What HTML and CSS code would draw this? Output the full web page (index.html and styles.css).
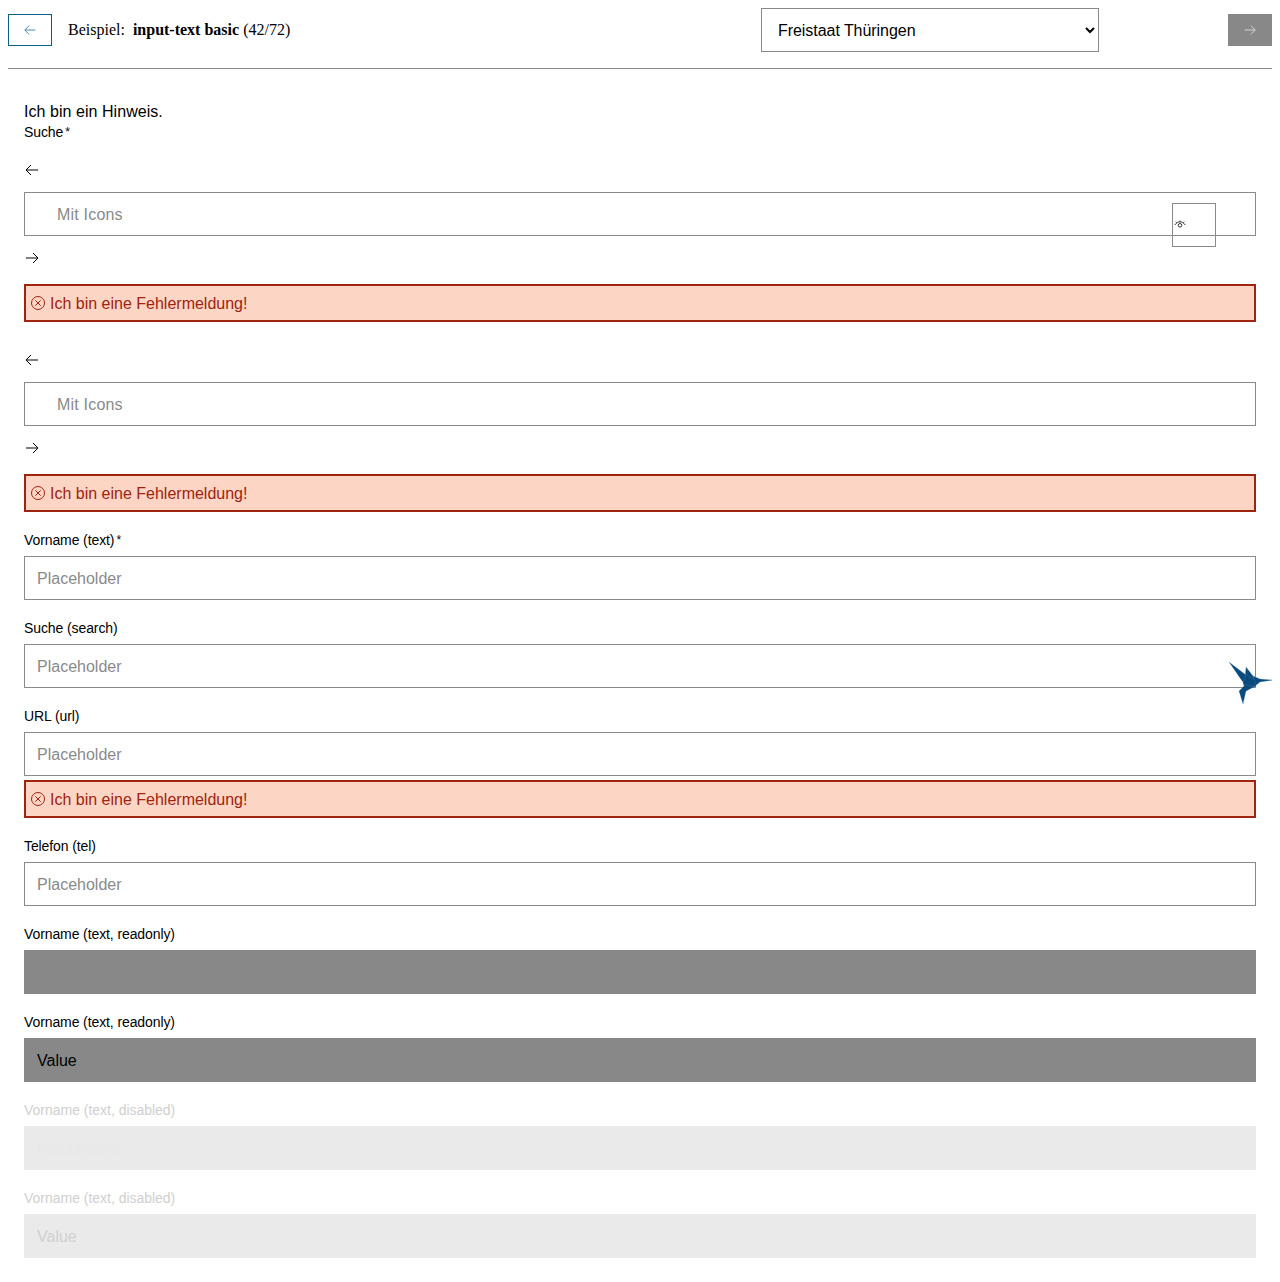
FILE: index.html
```html
<!DOCTYPE html>
<html lang="de">
<head>
<meta charset="utf-8">
<title>input-text basic</title>
<link rel="stylesheet" href="styles.css">
</head>
<body>
<header class="topbar">
  <button class="nav nav-prev" aria-label="Zurück">
    <svg class="icon" viewBox="0 0 16 16"><path d="M14 8H2.500M7 3 2 8l5 5"/></svg>
  </button>
  <p class="title">Beispiel: <b>input-text basic</b> (42/72)</p>
  <select class="theme"><option>Freistaat Thüringen</option></select>
  <button class="nav nav-next" aria-label="Weiter">
    <svg class="icon" viewBox="0 0 16 16"><path d="M2 8h11.500M9 3l5 5-5 5"/></svg>
  </button>
</header>
<main class="content">
  <p class="hint">Ich bin ein Hinweis.</p>
  <label class="label">Suche<span class="req">*</span></label>
  <div class="icon-field first">
    <svg class="icon side" viewBox="0 0 16 16"><path d="M14 8H2.500M7 3 2 8l5 5"/></svg>
    <div class="input-wrap">
      <input class="input with-icon" placeholder="Mit Icons">
      <button class="eye" aria-label="Anzeigen">
        <svg viewBox="0 0 12 12"><path d="M.8 6C2.300 3.600 4 2.800 6 2.800S9.700 3.600 11.200 6M2.600 3.600 1.800 2.700M6 2.800V1.600M9.400 3.600l.8-.9"/><circle cx="6" cy="6.300" r="1.800"/></svg>
      </button>
    </div>
    <svg class="icon side" viewBox="0 0 16 16"><path d="M2 8h11.500M9 3l5 5-5 5"/></svg>
  </div>
  <div class="error">
    <svg class="err-icon" viewBox="0 0 16 16"><circle cx="8" cy="8" r="6.500"/><path d="m5.300 5.300 5.400 5.400M10.700 5.300l-5.400 5.400"/></svg>
    Ich bin eine Fehlermeldung!
  </div>
  <div class="icon-field second">
    <svg class="icon side" viewBox="0 0 16 16"><path d="M14 8H2.500M7 3 2 8l5 5"/></svg>
    <input class="input with-icon" placeholder="Mit Icons">
    <svg class="icon side" viewBox="0 0 16 16"><path d="M2 8h11.500M9 3l5 5-5 5"/></svg>
  </div>
  <div class="error last-error">
    <svg class="err-icon" viewBox="0 0 16 16"><circle cx="8" cy="8" r="6.500"/><path d="m5.300 5.300 5.400 5.400M10.700 5.300l-5.400 5.400"/></svg>
    Ich bin eine Fehlermeldung!
  </div>
  <div class="field">
    <label class="label">Vorname (text)<span class="req">*</span></label>
    <input class="input" placeholder="Placeholder">
  </div>
  <div class="field">
    <label class="label">Suche (search)</label>
    <input class="input" type="search" placeholder="Placeholder">
  </div>
  <div class="field">
    <label class="label">URL (url)</label>
    <input class="input" placeholder="Placeholder">
    <div class="error under">
      <svg class="err-icon" viewBox="0 0 16 16"><circle cx="8" cy="8" r="6.500"/><path d="m5.300 5.300 5.400 5.400M10.700 5.300l-5.400 5.400"/></svg>
      Ich bin eine Fehlermeldung!
    </div>
  </div>
  <div class="field">
    <label class="label">Telefon (tel)</label>
    <input class="input" placeholder="Placeholder">
  </div>
  <div class="field">
    <label class="label">Vorname (text, readonly)</label>
    <input class="input readonly" readonly placeholder="Placeholder">
  </div>
  <div class="field">
    <label class="label">Vorname (text, readonly)</label>
    <input class="input readonly" readonly value="Value">
  </div>
  <div class="field">
    <label class="label muted">Vorname (text, disabled)</label>
    <input class="input disabled" disabled placeholder="Placeholder">
  </div>
  <div class="field">
    <label class="label muted">Vorname (text, disabled)</label>
    <input class="input disabled" disabled value="Value">
  </div>
</main>
<svg class="bird" viewBox="0 0 70 65" aria-hidden="true">
  <polygon points="19,12 36,25 43,30 35,35 30,28"/>
  <polygon points="36,17 43,26 46,33 35,28"/>
  <polygon points="43,26 50,29 63,30 50,32 45,36"/>
  <polygon points="33,33 36,25 45,30 46,36 36,41"/>
  <polygon points="35,35 44,36 36,41 33,54 29,41"/>
</svg>
</body>
</html>
```

FILE: styles.css
```css
* { box-sizing: border-box; }
body {
  margin: 8px;
  font-family: "Liberation Sans", Arial, sans-serif;
  color: #000;
  position: relative;
}
.topbar {
  display: flex;
  align-items: center;
  height: 61px;
  padding-bottom: 16px;
  border-bottom: 1px solid #8a8a8a;
}
.nav {
  width: 44px;
  height: 32px;
  padding: 0;
  border: 1px solid #0b6088;
  background: #fff;
  display: flex;
  align-items: center;
  justify-content: center;
  flex: none;
}
.nav-prev { color: #2a7ea6; }
.nav-next { background: #888; border-color: #888; color: #ddd; margin-left: 129px; }
.icon {
  width: 14px;
  height: 14px;
  fill: none;
  stroke: currentColor;
  stroke-width: 1;
}
.title {
  margin: 0 0 0 16px;
  width: 693px;
  font: 16px/20px "Liberation Serif", "Times New Roman", serif;
  white-space: pre-wrap;
}
.title b { margin-left: 4px; }
.theme {
  width: 338px;
  height: 44px;
  flex: none;
  padding: 0 12px;
  font: 16px "Liberation Sans", Arial, sans-serif;
  letter-spacing: -0.05px;
  color: #000;
  background: #fff;
  border: 1px solid #8a8a8a;
  border-radius: 0;
}
.content {
  padding: 30px 16px 0;
}
.hint {
  margin: 0;
  padding-top: 3px;
  font-size: 16px;
  line-height: 20px;
  letter-spacing: 0.05px;
}
.label {
  display: block;
  font-size: 14px;
  line-height: 20px;
  height: 20px;
  letter-spacing: -0.1px;
}
.req {
  font-size: 12px;
  margin-left: 2px;
  vertical-align: 1px;
}
.muted { color: #d0d0d0; letter-spacing: -0.02px; }
.field { margin-bottom: 18px; }
.field .label { margin-bottom: 6px; }
.input {
  display: block;
  width: 100%;
  height: 44px;
  padding: 2px 12px 0;
  border: 1px solid #8a8a8a;
  border-radius: 0;
  background: #fff;
  font: 16px "Liberation Sans", Arial, sans-serif;
  color: #000;
  outline: none;
  appearance: none;
}
.input::placeholder { color: #8a8a8a; opacity: 1; }
.with-icon { padding-left: 32px; }
.with-icon::placeholder { letter-spacing: 0.2px; }
.readonly { background: #888; border-color: #888; }
.readonly::placeholder { color: #888; }
.disabled { background: #eaeaea; border-color: #eaeaea; color: #d0d0d0; opacity: 1; -webkit-text-fill-color: #d0d0d0; }
.disabled::placeholder { color: #e8e8e8; -webkit-text-fill-color: #e8e8e8; }
.icon-field {
  display: flex;
  flex-direction: column;
}
.icon-field .side {
  display: block;
  width: 16px;
  height: 16px;
  margin: 14px 0;
  color: #000;
}
.first .side:first-child { margin-top: 20px; }
.second .side:first-child { margin-top: 30px; }
.input-wrap { position: relative; }
.eye {
  position: absolute;
  top: 11px;
  right: 40px;
  width: 44px;
  height: 44px;
  padding: 0;
  background: transparent;
  border: 1px solid #8a8a8a;
}
.eye svg {
  position: absolute;
  left: 1px;
  top: 15px;
  width: 12px;
  height: 12px;
  fill: none;
  stroke: #333;
  stroke-width: 1;
}
.error {
  display: flex;
  align-items: center;
  gap: 4px;
  height: 38px;
  margin-top: 4px;
  padding: 2px 4px 0;
  background: #fcd5c4;
  border: 2px solid #9f2410;
  color: #9f2410;
  font-size: 16px;
  line-height: 20px;
}
.last-error { margin-bottom: 18px; }
.err-icon {
  width: 16px;
  height: 16px;
  flex: none;
  margin-top: -2px;
  fill: none;
  stroke: currentColor;
  stroke-width: 1;
}
.bird {
  position: absolute;
  left: 1202px;
  top: 642px;
  width: 70px;
  height: 65px;
  fill: #0a4a7d;
  stroke: #5f8fb5;
  stroke-width: 0.25;
}
```
